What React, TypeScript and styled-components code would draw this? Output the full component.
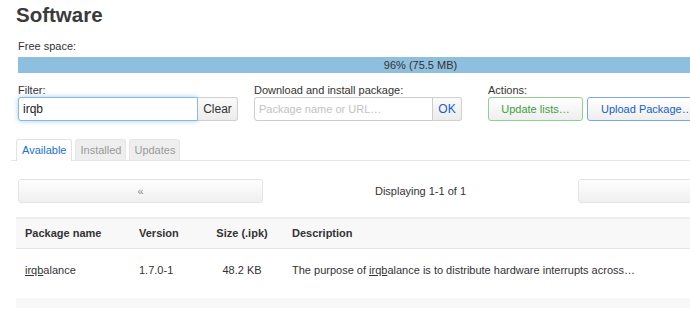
import React from "react";
import styled, { createGlobalStyle, css } from "styled-components";

const Global = createGlobalStyle`
  html, body { margin: 0; padding: 0; background: #fff; overflow: hidden; }
  body {
    font-family: "Liberation Sans", Arial, sans-serif;
    font-size: 11px;
    color: #333;
  }
`;

const Page = styled.div`
  padding: 2px 0 0 16px;
  width: 808px;
`;

const Title = styled.h2`
  margin: 0;
  font-size: 20.5px;
  line-height: 26px;
  font-weight: bold;
  color: #3a3a3a;
`;

const Field = styled.div`
  margin: 11px 0 0 2px;
`;

const Label = styled.label`
  display: block;
  line-height: 14px;
  color: #333;
`;

const Bar = styled.div`
  margin-top: 4px;
  width: 805px;
  height: 16px;
  line-height: 16px;
  background: #8fbfdf;
  text-align: center;
  color: #333;
`;

const Controls = styled.div`
  margin: 10px 0 0 2px;
  display: grid;
  grid-template-columns: 236px 234px auto;
`;

const InputRow = styled.div`
  display: flex;
  height: 24px;
`;

const TextInput = styled.input<{ $focused?: boolean; $w: number }>`
  box-sizing: border-box;
  width: ${(p) => p.$w}px;
  height: 24px;
  margin: 0;
  padding: 0 4px;
  border: 1px solid #ccc;
  border-radius: 3px 0 0 3px;
  font-family: "Liberation Sans", Arial, sans-serif;
  font-size: 12px;
  color: #222;
  outline: none;
  &::placeholder { color: #c2c2c2; font-size: 11px; }
  ${(p) =>
    p.$focused &&
    css`
      border-color: #86b8e8;
      box-shadow: 0 0 5px rgba(90, 160, 235, 0.55);
    `}
`;

const AddonButton = styled.button<{ $w: number; $color?: string }>`
  box-sizing: border-box;
  width: ${(p) => p.$w}px;
  height: 24px;
  margin: 0;
  padding: 0;
  border: 1px solid #d0d0d0;
  border-left: none;
  border-radius: 0 3px 3px 0;
  background: linear-gradient(#fafafa, #ececec);
  font-family: "Liberation Sans", Arial, sans-serif;
  font-size: 12px;
  color: ${(p) => p.$color || "#333"};
`;

const Actions = styled.div`
  display: flex;
  gap: 4px;
`;

const ActionButton = styled.button<{ $tone: "green" | "blue"; $w: number }>`
  box-sizing: border-box;
  width: ${(p) => p.$w}px;
  flex: none;
  height: 24px;
  margin: 0;
  padding: 0 0 0 ${(p) => (p.$tone === "blue" ? 13 : 0)}px;
  text-align: ${(p) => (p.$tone === "blue" ? "left" : "center")};
  border-radius: 3px;
  background: linear-gradient(#ffffff, #eeeeee);
  font-family: "Liberation Sans", Arial, sans-serif;
  font-size: 11px;
  border: 1px solid ${(p) => (p.$tone === "green" ? "#8fcf8f" : "#7aa8e0")};
  color: ${(p) => (p.$tone === "green" ? "#3c9f3c" : "#1560c8")};
`;

const TabBar = styled.div`
  margin: 18px 0 0 -5px;
  padding-left: 5px;
  display: flex;
  gap: 3px;
  border-bottom: 1px solid #e6e6e6;
  height: 21px;
`;

const Tab = styled.div<{ $active?: boolean }>`
  box-sizing: border-box;
  height: ${(p) => (p.$active ? 22 : 21)}px;
  padding: ${(p) => (p.$active ? "0 5px" : "0 4px")};
  line-height: 20px;
  border: 1px solid ${(p) => (p.$active ? "#e2e2e2" : "#e6e6e6")};
  border-bottom: none;
  border-radius: 3px 3px 0 0;
  background: ${(p) => (p.$active ? "#fff" : "#eeeeee")};
  color: ${(p) => (p.$active ? "#1a6fd6" : "#9a9a9a")};
  font-size: 11px;
`;

const Pager = styled.div`
  margin: 18px 0 0 2px;
  width: 805px;
  display: grid;
  grid-template-columns: 245px 1fr 245px;
  align-items: center;
`;

const PagerButton = styled.button`
  box-sizing: border-box;
  height: 24px;
  margin: 0;
  border: 1px solid #e4e4e4;
  border-radius: 3px;
  background: linear-gradient(#ffffff, #efefef);
  color: #888;
  font-family: "Liberation Sans", Arial, sans-serif;
  font-size: 11px;
`;

const PagerInfo = styled.div`
  text-align: center;
  color: #333;
`;

const Table = styled.table`
  margin-top: 14px;
  width: 808px;
  border-collapse: collapse;
  border-top: 2px solid #eeeeee;
  table-layout: fixed;
`;

const HeadRow = styled.tr`
  background: #f8f8f8;
  height: 30px;
  border-bottom: 1px solid #e4e4e4;
`;

const Th = styled.th<{ $w?: number; $center?: boolean }>`
  box-sizing: border-box;
  ${(p) => p.$w && `width: ${p.$w}px;`}
  padding: 0 9px;
  text-align: ${(p) => (p.$center ? "center" : "left")};
  font-weight: bold;
  font-size: 11px;
  color: #333;
`;

const Row = styled.tr`
  height: 55px;
  border-bottom: 10px solid #f8f8f8;
`;

const Td = styled.td<{ $center?: boolean }>`
  padding: 14px 9px 0;
  vertical-align: top;
  line-height: 14px;
  text-align: ${(p) => (p.$center ? "center" : "left")};
  white-space: nowrap;
  color: #333;
`;

const Match = styled.span`
  text-decoration: underline;
`;

export default function App() {
  return (
    <>
      <Global />
      <Page>
        <Title>Software</Title>
        <Field>
          <Label>Free space:</Label>
          <Bar>96% (75.5 MB)</Bar>
        </Field>
        <Controls>
          <div>
            <Label>Filter:</Label>
            <InputRow>
              <TextInput $w={180} $focused defaultValue="irqb" />
              <AddonButton $w={40}>Clear</AddonButton>
            </InputRow>
          </div>
          <div>
            <Label>Download and install package:</Label>
            <InputRow>
              <TextInput $w={179} placeholder="Package name or URL…" />
              <AddonButton $w={29} $color="#1560c8">
                OK
              </AddonButton>
            </InputRow>
          </div>
          <div>
            <Label>Actions:</Label>
            <Actions>
              <ActionButton $tone="green" $w={95}>
                Update lists…
              </ActionButton>
              <ActionButton $tone="blue" $w={118}>
                Upload Package…
              </ActionButton>
            </Actions>
          </div>
        </Controls>
        <TabBar>
          <Tab $active>Available</Tab>
          <Tab>Installed</Tab>
          <Tab>Updates</Tab>
        </TabBar>
        <Pager>
          <PagerButton>«</PagerButton>
          <PagerInfo>Displaying 1-1 of 1</PagerInfo>
          <PagerButton>»</PagerButton>
        </Pager>
        <Table>
          <thead>
            <HeadRow>
              <Th $w={114}>Package name</Th>
              <Th $w={71}>Version</Th>
              <Th $w={82} $center>
                Size (.ipk)
              </Th>
              <Th>Description</Th>
            </HeadRow>
          </thead>
          <tbody>
            <Row>
              <Td>
                <Match>irqb</Match>alance
              </Td>
              <Td>1.7.0-1</Td>
              <Td $center>48.2 KB</Td>
              <Td>
                The purpose of <Match>irqb</Match>alance is to distribute
                hardware interrupts across…
              </Td>
            </Row>
          </tbody>
        </Table>
      </Page>
    </>
  );
}
